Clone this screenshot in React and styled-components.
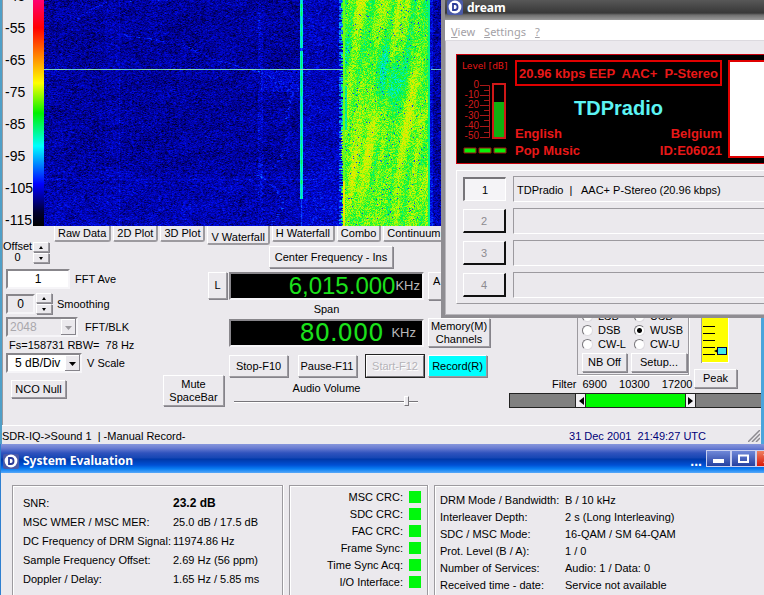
import React, { useEffect, useRef } from "react";
import styled, { createGlobalStyle, css } from "styled-components";

const face = "#ebe9ed";
const light = "#ffffff";
const shade = "#9c9a9f";
const sans = '"Liberation Sans", Arial, sans-serif';

const GlobalStyle = createGlobalStyle`
  *, *::before, *::after { box-sizing: border-box; }
  html, body { margin: 0; height: 100%; }
  body {
    background: ${face};
    color: #000;
    font: 11px/14px ${sans};
    overflow: hidden;
  }
  button, input, select { font: inherit; color: inherit; margin: 0; padding: 0; border-radius: 0; }
  table { border-collapse: collapse; }
  td, th { padding: 0; text-align: left; font-weight: normal; white-space: nowrap; }
`;

const raised = css`
  border: 1px solid;
  border-color: ${light} ${shade} ${shade} ${light};
  box-shadow: 1px 1px 0 #85838a;
`;
const sunken = css`
  border: 2px solid;
  border-color: #88868b #f6f5f8 #f6f5f8 #88868b;
`;

const Desktop = styled.div`
  position: relative;
  display: flex;
  flex-direction: column;
  min-height: 100vh;
  overflow: hidden;
`;

/* ---------- receiver window ---------- */

const Receiver = styled.main`
  display: flex;
  flex-direction: column;
  background: ${face};
  border-left: 2px solid #4f9fc8;
  border-right: 3px solid #4aa5dc;
`;

const Spectrum = styled.section`
  display: flex;
  height: 226px;
  overflow: hidden;
  border-left: 1px solid ${shade};
`;
const Scale = styled.ol`
  list-style: none;
  margin: -20px 0 0;
  padding: 0 0 0 2px;
  width: 30px;
  flex: none;
  font-size: 14px;
  white-space: nowrap;
  li { height: 32px; line-height: 32px; }
`;
const Palette = styled.div`
  width: 11px;
  flex: none;
  background: linear-gradient(#ff0070 0, #ff0000 28px, #ff8000 55px, #ffff00 83px,
    #00f000 113px, #00ffff 146px, #0000ff 184px, #000030 212px, #000 226px);
`;
const Waterfall = styled.canvas`
  display: block;
  flex: none;
`;

const Controls = styled.section`
  display: grid;
  grid-template-columns: 50px 110px 66px 196px 66px minmax(0, 1fr);
  grid-template-rows: 19px 20px 160px;
  border-left: 1px solid ${shade};
`;

const OffsetBlock = styled.div`
  grid-area: 1 / 1 / 3 / 2;
  display: flex;
  align-items: flex-end;
  gap: 1px;
  padding-bottom: 2px;
  line-height: 11px;
  text-align: center;
`;
const Spin = styled.span`
  display: flex;
  flex-direction: column;
  gap: 1px;
  flex: none;
`;
const SpinButton = styled.button`
  ${raised}
  display: grid;
  place-items: center;
  width: 16px;
  height: 10px;
  background: ${face};
  svg { display: block; }
`;

const Tabs = styled.nav`
  grid-area: 1 / 2 / 2 / 7;
  display: flex;
  align-items: flex-start;
  gap: 2px;
  padding-left: 1px;
  overflow: hidden;
`;
const Tab = styled.button`
  border: solid;
  border-width: 0 2px 2px 1px;
  border-color: ${face} ${shade} ${shade} ${light};
  border-radius: 0 0 3px 2px;
  background: ${face};
  height: ${(p) => (p.$active ? 19 : 16)}px;
  line-height: 12px;
  padding: ${(p) => (p.$active ? 4 : 0)}px 3px 0;
  white-space: nowrap;
`;

const Settings = styled.div`
  grid-area: 3 / 1 / 4 / 3;
  padding: 4px 0 0 3px;
  display: flex;
  flex-direction: column;
  align-items: flex-start;
`;
const Field = styled.label`
  display: flex;
  align-items: center;
  gap: ${(p) => p.$gap || 5}px;
  margin-bottom: ${(p) => p.$after || 0}px;
  white-space: nowrap;
`;
const Entry = styled.input`
  ${sunken}
  width: ${(p) => p.$w}px;
  height: 20px;
  text-align: center;
  background: ${(p) => (p.$flat ? face : "#fff")};
  font-size: 12px;
`;
const Pick = styled.span`
  position: relative;
  display: block;
  svg {
    position: absolute;
    right: 2px;
    top: 2px;
    pointer-events: none;
  }
`;
const Select = styled.select`
  ${sunken}
  appearance: none;
  display: block;
  width: ${(p) => p.$w}px;
  height: 20px;
  padding-left: ${(p) => p.$pad}px;
  background: ${(p) => (p.disabled ? face : "#fff")};
  color: ${(p) => (p.disabled ? "#a9a7ac" : "#000")};
  opacity: 1;
  font-size: 12px;
`;
const Note = styled.p`
  margin: 0;
  padding-left: 3px;
  line-height: 16px;
  white-space: pre;
`;

const Button = styled.button`
  ${raised}
  background: ${(p) => p.$bg || face};
  width: ${(p) => (p.$w ? p.$w + "px" : "auto")};
  height: ${(p) => p.$h || 22}px;
  line-height: 13px;
  white-space: pre;
  flex: none;
  &:disabled {
    color: #b5b3b8;
    text-shadow: 1px 1px 0 #fff;
    outline: 1px solid #222;
    box-shadow: none;
    border-right-color: #77757a;
    border-bottom-color: #77757a;
  }
`;
const NullKey = styled(Button)`
  margin-left: 5px;
`;

const SideKeys = styled.div`
  grid-area: 2 / 3 / 4 / 4;
  display: flex;
  flex-direction: column;
  justify-content: space-between;
  padding: 27px 5px 19px 0;
`;
const LeftKey = styled(Button)`
  align-self: flex-end;
  margin-right: -3px;
`;

const Tuning = styled.div`
  grid-area: 2 / 4 / 4 / 5;
  display: flex;
  flex-direction: column;
  padding: 1px 1px 0 0;
`;
const CenterButton = styled(Button)`
  align-self: center;
  margin: 0 0 4px 9px;
`;
const Readout = styled.output`
  ${sunken}
  display: flex;
  align-items: center;
  justify-content: flex-end;
  gap: ${(p) => (p.$wide ? 8 : 0)}px;
  height: 28px;
  padding-right: ${(p) => (p.$wide ? 6 : 2)}px;
  background: #000;
  color: #1be01b;
  font: 24px/24px ${(p) => (p.$wide ? '"DejaVu Sans", sans-serif' : sans)};
  small { font: 13px/24px ${sans}; color: #b9b9b9; }
`;
const Caption = styled.div`
  text-align: center;
  line-height: ${(p) => p.$h}px;
`;
const KeyRow = styled.div`
  display: flex;
  justify-content: space-between;
  padding: 8px 0 3px;
`;
const Volume = styled.input`
  appearance: none;
  display: block;
  width: 184px;
  height: 10px;
  margin: 0 0 0 5px;
  background: linear-gradient(#77757a, #77757a) 0 5px / 100% 1px no-repeat,
    linear-gradient(#fff, #fff) 0 6px / 100% 1px no-repeat;
  &::-webkit-slider-thumb {
    appearance: none;
    width: 5px;
    height: 10px;
    background: ${face};
    border: 1px solid;
    border-color: #fff #77757a #77757a #fff;
  }
`;

const Memory = styled.div`
  grid-area: 2 / 5 / 4 / 6;
  display: flex;
  flex-direction: column;
  align-items: flex-start;
  padding: 27px 0 0 3px;
`;
const ArrowKey = styled(Button)`
  text-align: left;
  padding: 0 0 10px 4px;
  margin-bottom: 18px;
`;
const MemoryKey = styled(Button)`
  margin-bottom: 8px;
`;

const Demod = styled.div`
  grid-area: 2 / 6 / 4 / 7;
  display: flex;
  flex-direction: column;
  justify-content: flex-end;
  padding: 0 0 17px 18px;
`;
const DemodTop = styled.div`
  display: flex;
  align-items: flex-end;
  gap: 5px;
  padding-left: 68px;
`;
const ModeBox = styled.fieldset`
  margin: 0 0 13px;
  width: 112px;
  border: 1px solid ${shade};
  box-shadow: 1px 1px 0 #fff;
  padding: 0 1px 2px 4px;
  flex: none;
`;
const Modes = styled.div`
  display: grid;
  grid-template-columns: 52px 1fr;
  margin-bottom: 2px;
  label { display: flex; align-items: center; gap: 5px; height: 14px; }
`;
const Radio = styled.input`
  appearance: none;
  flex: none;
  width: 11px;
  height: 11px;
  border-radius: 50%;
  border: 1px solid;
  border-color: #77757a #dddbe0 #dddbe0 #77757a;
  background: #fff;
  &:checked { background: radial-gradient(circle, #000 0 2px, #fff 3px); }
`;
const ModeKeys = styled.div`
  display: flex;
  justify-content: space-between;
`;
const PeakColumn = styled.div`
  display: flex;
  flex-direction: column;
  gap: 6px;
`;
const Gain = styled.svg`
  display: block;
  margin-left: 7px;
`;
const FilterRow = styled.div`
  display: flex;
  gap: 6px;
  line-height: 14px;
  margin-top: -11px;
  padding-left: 43px;
  white-space: nowrap;
`;
const FilterValues = styled.div`
  display: flex;
  justify-content: space-between;
  width: 110px;
`;
const FilterBar = styled.div`
  display: grid;
  grid-template-columns: 65px 10px 100px 10px minmax(0, 1fr);
  height: 15px;
  margin-top: 2px;
  background: #808080;
  border: 1px solid #222;
  border-right: 0;
`;
const Grip = styled.button`
  border: 0;
  border-left: 1px solid #222;
  background: #f2f1f4;
  display: grid;
  place-items: center;
`;
const Pass = styled.div`
  background: #00f800;
  border-left: 1px solid #222;
`;
const HighStop = styled.span`
  border-left: 1px solid #222;
`;

const StatusBar = styled.footer`
  display: flex;
  align-items: center;
  justify-content: space-between;
  height: 19px;
  border-top: 1px solid #fff;
  padding-top: 2px;
  white-space: pre;
  time { color: #000078; margin-left: auto; margin-right: 42px; }
  svg { margin-right: 1px; }
`;

/* ---------- dream window ---------- */

const Dream = styled.section`
  position: absolute;
  top: 0;
  left: 441px;
  right: 0;
  height: 318px;
  border: solid #8f8d92;
  border-width: 0 0 3px 4px;
  background: ${face};
  box-shadow: inset 0 -1px 0 #b9b7bc, inset 1px 0 0 #b9b7bc;
  overflow: hidden;
`;
const DreamTitle = styled.header`
  display: flex;
  align-items: flex-start;
  gap: 4px;
  height: 20px;
  padding-left: 2px;
  background: linear-gradient(#585858, #444 8px, #383838 13px, #6e6e6e 15px, #9a9a9a);
  h1 { margin: 0; font: 700 12px/15px "Noto Sans", sans-serif; color: #fff; }
`;
const Menu = styled.nav`
  display: flex;
  gap: 9px;
  height: 21px;
  padding: 3px 6px 0;
  background: #fff;
  border-bottom: 1px solid #dcdadf;
  button {
    border: 0;
    background: none;
    color: #a3a1a6;
    font: 11px/15px "Noto Sans", sans-serif;
  }
`;
const Display = styled.div`
  display: flex;
  align-items: stretch;
  margin: 13px 0 0 11px;
  height: 110px;
  background: #000;
  border: solid #c8000c;
  border-width: 1px 0 1px 1px;
  color: #e81818;
`;
const Meter = styled.div`
  width: 58px;
  flex: none;
  padding: 6px 0 0 5px;
  h2 { margin: 0; font: 9px/11px "DejaVu Sans", sans-serif; white-space: nowrap; }
  svg { display: block; }
`;
const Info = styled.div`
  display: flex;
  flex-direction: column;
  flex: 0 0 207px;
  padding-top: 5px;
  font: 700 13px/17px ${sans};
`;
const Rate = styled.div`
  border: 2px solid #e00000;
  height: 26px;
  line-height: 23px;
  text-align: center;
  white-space: pre;
`;
const Station = styled.h2`
  margin: 8px 0 3px;
  text-align: center;
  font: 700 20px/28px ${sans};
  color: #5cf4f4;
`;
const Pair = styled.div`
  display: flex;
  justify-content: space-between;
`;
const Picture = styled.div`
  flex: 1;
  margin: 5px 0 5px 6px;
  border: solid #e00000;
  border-width: 2px 0 2px 2px;
  background: #fff;
`;
const Services = styled.div`
  display: grid;
  grid-template-columns: 43px minmax(0, 1fr);
  gap: 6px 7px;
  margin: 6px 0 0 11px;
  padding: 5px 0 5px 6px;
  border: solid;
  border-width: 1px 0 1px 1px;
  border-color: #fff ${shade} ${shade} #fff;
`;
const Service = styled.button`
  height: 24px;
  margin: 1px 0 0;
  border: solid;
  border-width: ${(p) => (p.$on ? "2px 1px 1px 2px" : "1px 2px 2px 1px")};
  border-color: ${(p) => (p.$on ? "#77757a #fff #fff #77757a" : "#fff #111 #111 #fff")};
  background: ${(p) => (p.$on ? "#f5f4f7" : face)};
  &:disabled { color: #8d8b90; }
`;
const ServiceText = styled.div`
  height: 26px;
  line-height: 26px;
  padding-left: 3px;
  border: solid;
  border-width: 1px 0 1px 1px;
  border-color: ${shade} #fff #fff ${shade};
  white-space: pre;
`;

/* ---------- evaluation window ---------- */

const Evaluation = styled.section`
  flex: 1;
  display: flex;
  flex-direction: column;
  min-height: 151px;
  border-left: 1px solid #2f7fd0;
  background: ${face};
`;
const EvalTitle = styled.header`
  display: flex;
  align-items: center;
  gap: 4px;
  height: 29px;
  padding: 5px 0 0 2px;
  color: #fff;
  overflow: hidden;
  background: linear-gradient(#8796dc, #6a7dd2 4px, #2f52bd 9px, #1546b4 14px, #0038a8 15px,
    #0050d4 21px, #0a80f4 25px, #58a8f8);
  h1 { margin: 0; font: 700 12px/16px "Noto Sans", sans-serif; flex: 1; white-space: nowrap; }
`;
const Caps = styled.div`
  display: flex;
  flex: none;
  margin: -5px -17px 0 0;
`;
const Cap = styled.button`
  display: grid;
  place-items: center;
  width: 25px;
  height: 17px;
  border: 1px solid #c8cff0;
  background: ${(p) => (p.$close ? "linear-gradient(#f08060, #d81808)" : "linear-gradient(#7088d8, #2440a0)")};
`;
const Dots = styled.span`
  font: 700 14px/14px ${sans};
`;
const Panels = styled.div`
  flex: 1;
  display: grid;
  grid-template-columns: 271px 139px minmax(0, 1fr);
  gap: 6px;
  padding: 12px 0 0 11px;
`;
const Panel = styled.div`
  border: solid ${shade};
  border-width: ${(p) => (p.$open ? "1px 0 0 1px" : "1px 1px 0 1px")};
  box-shadow: inset 1px 1px 0 #fff, 1px 0 0 #fff;
  padding: ${(p) => p.$pad};
`;
const Facts = styled.table`
  th { width: ${(p) => p.$w}px; }
  td, th { height: ${(p) => p.$row}px; }
  strong { font-size: 12px; }
`;
const Checks = styled.ul`
  list-style: none;
  margin: 0;
  padding: 0;
  li {
    display: flex;
    justify-content: flex-end;
    align-items: center;
    gap: 6px;
    height: 17px;
  }
`;
const Lamp = styled.span`
  width: 12px;
  height: 12px;
  background: #00f80c;
`;

/* ---------- drawings ---------- */

const Arrow = ({ dir = "up" }) => {
  const paths = { up: "M0 3L2 0L4 3Z", down: "M0 0L4 0L2 3Z" };
  return (
    <svg width="4" height="3" viewBox="0 0 4 3" aria-hidden="true">
      <path d={paths[dir]} fill="#000" />
    </svg>
  );
};

const DropArrow = ({ muted }) => (
  <svg width="15" height="16" viewBox="0 0 15 16" aria-hidden="true">
    <rect width="15" height="16" fill="#85838a" />
    <rect width="14" height="15" fill="#fff" />
    <rect x="1" y="1" width="13" height="14" fill={face} />
    <path d="M4 7H11L7.5 11Z" fill={muted ? "#9c9a9f" : "#000"} />
  </svg>
);

const Logo = () => (
  <svg width="16" height="15" viewBox="0 0 16 15" aria-hidden="true">
    <rect width="16" height="15" rx="2" fill="#4a5aa8" />
    <circle cx="8" cy="7" r="6.4" fill="#fff" />
    <path d="M6 4H8C11.4 4 11.400 10 8 10H6Z" fill="none" stroke="#2b3c98" strokeWidth="1.8" />
  </svg>
);

const hash = (x, y) => {
  let n = Math.imul(x | 0, 374761393) + Math.imul(y | 0, 668265263);
  n = Math.imul(n ^ (n >>> 13), 1274126177);
  return ((n ^ (n >>> 16)) >>> 0) / 4294967296;
};
const smooth = (x, y) => {
  const i = Math.floor(x);
  const j = Math.floor(y);
  const f = x - i;
  const g = y - j;
  const a = hash(i, j) * (1 - f) + hash(i + 1, j) * f;
  const b = hash(i, j + 1) * (1 - f) + hash(i + 1, j + 1) * f;
  return a * (1 - g) + b * g;
};
const stops = [
  [0, 0, 0, 20],
  [0.1, 0, 0, 125],
  [0.24, 0, 10, 235],
  [0.36, 10, 90, 255],
  [0.5, 0, 235, 235],
  [0.62, 0, 245, 60],
  [0.76, 190, 250, 0],
  [0.87, 250, 225, 0],
  [1, 255, 90, 0],
];
const colour = (t) => {
  const v = Math.min(1, Math.max(0, t));
  let k = 1;
  while (stops[k][0] < v) k += 1;
  const a = stops[k - 1];
  const b = stops[k];
  const f = (v - a[0]) / (b[0] - a[0]);
  return [1, 2, 3].map((c) => a[c] + (b[c] - a[c]) * f);
};

/* faint drifting carriers, as polylines in canvas coordinates */
const traces = [
  [[76, 34], [140, 44], [165, 58], [215, 72]],
  [[30, 20], [46, 10], [60, 2], [110, 0]],
  [[216, 72], [240, 84], [250, 92], [243, 110], [243, 150], [230, 166], [215, 175], [235, 190], [238, 205], [226, 225]],
];
const traceX = (pts, y) => {
  for (let k = 1; k < pts.length; k += 1) {
    const [x0, y0] = pts[k - 1];
    const [x1, y1] = pts[k];
    const lo = Math.min(y0, y1);
    const hi = Math.max(y0, y1);
    if (y >= lo && y < hi) return [x0 + ((x1 - x0) * (y - y0)) / (y1 - y0), Math.abs((x1 - x0) / (y1 - y0))];
  }
  return null;
};

const paint = (canvas) => {
  const g = canvas.getContext("2d");
  const { width, height } = canvas;
  const img = g.createImageData(width, height);
  for (let y = 0; y < height; y += 1) {
    const hits = traces.map((t) => traceX(t, y));
    for (let x = 0; x < width; x += 1) {
      const r = (hash(x, y) + hash(x + 1, y) + hash(x + 977, y * 3)) / 3;
      let t = 0.005 + r * 0.27 + (smooth(x / 14, y / 9) - 0.5) * 0.04;
      if (x > 257 && x < 300) t += 0.035;
      if (x > 60 && x < 76) t += 0.012;
      if (y > 170) t += 0.015 + (y - 170) * 0.0003;
      if (x > 213 && x < 219) t += 0.09 * hash(x, y + 7);
      if (x > 216 && x < 255 && y > 69 && y < 92) t += 0.09 * hash(x + 5, y);
      if (x === 75) t += 0.04;
      hits.forEach((h, k) => {
        const wobble = (hash(k, y >> 1) - 0.5) * 4;
        if (h && Math.abs(x - h[0] - wobble) < 1 + h[1] / 2 && hash(x >> 2, y) > 0.5) t += 0.1;
      });
      if (y === 179) t += 0.04;
      const edge = 298 + Math.round((hash(3, y) - 0.5) * 3);
      if (x >= edge && x < 386) {
        const u = x + y * 0.15;
        const band = smooth(u / 5, y / 80 + 9) * 0.55 + smooth(u / 12, y / 60) * 0.45;
        t = 0.52 + band * 0.33 + (hash(x, y) - 0.5) * 0.17;
        const hole = Math.exp(-(((x - 346) / 12) ** 2) - ((y - 78) / 28) ** 2);
        t -= hole * 0.15;
        if (x < 303 && y > 85 && y < 130) t = 0.5 + r * 0.12;
        if (hash(x * 7, y) > 0.988) t = 0.32;
        if (x === 299 || x === 300) t = y > 180 ? 0.85 : 0.7;
        if (x > 383) t = 0.57;
      } else if (x > 294 && x < edge && hash(1, y) > 0.5) {
        t = 0.25 + r * 0.25;
      } else if (x >= 386 && x < 389) {
        t += 0.08;
      }
      if (x > 255 && x < 259) {
        if (y < 199) t = (x === 257 ? 0.53 : 0.46) + hash(2, y >> 2) * 0.08;
        else if (x === 257) t += 0.12;
        if (y > 47 && y < 51) t -= 0.2;
      }
      const sweep = y === 69 && (x < 298 || x > 386);
      const tone = smooth(x / 9, 3);
      const [R, G, B] = sweep ? [90 + tone * 60, 190 + tone * 40, 215 - tone * 50] : colour(t);
      const o = (y * width + x) * 4;
      img.data[o] = R;
      img.data[o + 1] = G;
      img.data[o + 2] = B;
      img.data[o + 3] = 255;
    }
  }
  g.putImageData(img, 0, 0);
};

const WaterfallPlot = () => {
  const ref = useRef(null);
  useEffect(() => paint(ref.current), []);
  return <Waterfall ref={ref} width={720} height={226} role="img" aria-label="V Waterfall" />;
};

const MeterScale = () => (
  <svg width="46" height="75" viewBox="0 0 46 75" fill="none" aria-label="Level" fontFamily='"Liberation Sans", sans-serif' fontSize="10">
    <path d="M18 13.5H27.5V65.5H18M22 18.5H27M18 23.5H27M22 28.5H27M18 33.5H27M22 38.5H27M18 43.5H27M22 48.5H27M18 54.5H27M22 60.5H27" stroke="#a81818" />
    <g fill="#d01c1c" textAnchor="end">
      <text x="17" y="16">0</text>
      <text x="17" y="26">-10</text>
      <text x="17" y="36">-20</text>
      <text x="17" y="47">-30</text>
      <text x="17" y="57">-40</text>
      <text x="17" y="67">-50</text>
    </g>
    <rect x="31" y="12" width="12" height="54" stroke="#d01818" strokeWidth="2" />
    <rect x="32" y="30" width="10" height="35" fill="#10b010" />
  </svg>
);
const Leds = () => (
  <svg width="46" height="7" viewBox="0 0 46 7" aria-hidden="true">
    <path d="M2 1H14V6H2ZM17 1H29V6H17ZM32 1H44V6H32Z" fill="#08f008" stroke="#a01010" />
  </svg>
);

const tabs = ["Raw Data", "2D Plot", "3D Plot", "V Waterfall", "H Waterfall", "Combo", "Continuum"];
const levels = [-45, -55, -65, -75, -85, -95, -105, -115];
const modes = ["LSB", "USB", "DSB", "WUSB", "CW-L", "CW-U"];
const services = ["TDPradio  |   AAC+ P-Stereo (20.96 kbps)", "", "", ""];
const quality = [
  ["SNR:", <strong key="snr">23.2 dB</strong>],
  ["MSC WMER / MSC MER:", "25.0 dB / 17.5 dB"],
  ["DC Frequency of DRM Signal:", "11974.86 Hz"],
  ["Sample Frequency Offset:", "2.69 Hz (56 ppm)"],
  ["Doppler / Delay:", "1.65 Hz / 5.85 ms"],
];
const checks = ["MSC CRC:", "SDC CRC:", "FAC CRC:", "Frame Sync:", "Time Sync Acq:", "I/O Interface:"];
const channel = [
  ["DRM Mode / Bandwidth:", "B / 10 kHz"],
  ["Interleaver Depth:", "2 s (Long Interleaving)"],
  ["SDC / MSC Mode:", "16-QAM / SM 64-QAM"],
  ["Prot. Level (B / A):", "1 / 0"],
  ["Number of Services:", "Audio: 1 / Data: 0"],
  ["Received time - date:", "Service not available"],
];

const Spinner = ({ name }) => (
  <Spin>
    <SpinButton aria-label={`${name} up`}><Arrow /></SpinButton>
    <SpinButton aria-label={`${name} down`}><Arrow dir="down" /></SpinButton>
  </Spin>
);

const FactTable = ({ rows, w, row }) => (
  <Facts $w={w} $row={row}>
    <tbody>
      {rows.map(([k, v]) => (
        <tr key={k}><th scope="row">{k}</th><td>{v}</td></tr>
      ))}
    </tbody>
  </Facts>
);

export default function App() {
  return (
    <>
      <GlobalStyle />
      <Desktop>
        <Receiver>
          <Spectrum>
            <Scale>{levels.map((l) => <li key={l}>{l}</li>)}</Scale>
            <Palette />
            <WaterfallPlot />
          </Spectrum>
          <Controls>
            <OffsetBlock>
              <span>Offset<br />0</span>
              <Spinner name="Offset" />
            </OffsetBlock>
            <Tabs>
              {tabs.map((t) => <Tab key={t} $active={t === "V Waterfall"}>{t}</Tab>)}
            </Tabs>
            <Settings>
              <Field $after={4}><Entry $w={64} defaultValue="1" />FFT Ave</Field>
              <Field as="div" $after={3}>
                <Field as="div" $gap={1}>
                  <Entry id="smoothing" $w={29} $flat defaultValue="0" />
                  <Spinner name="Smoothing" />
                </Field>
                <label htmlFor="smoothing">Smoothing</label>
              </Field>
              <Field $gap={7}>
                <Pick>
                  <Select $w={72} $pad={2} disabled defaultValue="2048"><option>2048</option></Select>
                  <DropArrow muted />
                </Pick>
                FFT/BLK
              </Field>
              <Note>{"Fs=158731 RBW=  78 Hz"}</Note>
              <Field $after={7}>
                <Pick>
                  <Select $w={76} $pad={7} defaultValue="5 dB/Div"><option>5 dB/Div</option></Select>
                  <DropArrow />
                </Pick>
                V Scale
              </Field>
              <NullKey $w={55} $h={18}>NCO Null</NullKey>
            </Settings>
            <SideKeys>
              <LeftKey $w={19} $h={27}>L</LeftKey>
              <Button $h={31}>{"Mute\nSpaceBar"}</Button>
            </SideKeys>
            <Tuning>
              <CenterButton $w={124}>Center Frequency - Ins</CenterButton>
              <Readout>6,015.000<small>KHz</small></Readout>
              <Caption $h={19}>Span</Caption>
              <Readout $wide>80.000<small>KHz</small></Readout>
              <KeyRow>
                <Button $w={59}>Stop-F10</Button>
                <Button $w={59}>Pause-F11</Button>
                <Button $w={58} disabled>Start-F12</Button>
              </KeyRow>
              <Caption as="label" htmlFor="volume" $h={16}>Audio Volume</Caption>
              <Volume id="volume" type="range" min="0" max="100" defaultValue="95" />
            </Tuning>
            <Memory>
              <ArrowKey $w={60} $h={28}>A</ArrowKey>
              <MemoryKey $w={62} $h={29}>{"Memory(M)\nChannels"}</MemoryKey>
              <Button $w={59} $bg="#00ffff">Record(R)</Button>
            </Memory>
            <Demod>
              <DemodTop>
                <ModeBox>
                  <Modes>
                    {modes.map((m) => (
                      <label key={m}><Radio type="radio" name="mode" defaultChecked={m === "WUSB"} />{m}</label>
                    ))}
                  </Modes>
                  <ModeKeys>
                    <Button $w={45} $h={19}>NB Off</Button>
                    <Button $w={56} $h={19}>Setup...</Button>
                  </ModeKeys>
                </ModeBox>
                <PeakColumn>
                  <Gain width="28" height="52" viewBox="0 0 28 52" role="img" aria-label="Gain">
                    <rect width="28" height="52" fill="#fff" />
                    <path d="M0 52V0H1V52Z" fill="#9c9a9f" />
                    <rect x="1" width="26" height="51" fill="#ffff00" />
                    <path d="M2 15.500H14M2 22.500H14M2 29.500H14M2 36.500H14M2 43.500H14" stroke="#000" />
                    <path d="M13 40L17 38V42Z" />
                    <rect x="16.500" y="36.500" width="9" height="7" fill="#40e8e8" stroke="#004" />
                  </Gain>
                  <Button $w={43} $h={19}>Peak</Button>
                </PeakColumn>
              </DemodTop>
              <FilterRow>
                <span>Filter</span>
                <FilterValues>
                  <span>6900</span><span>10300</span><span>17200</span>
                </FilterValues>
              </FilterRow>
              <FilterBar>
                <span />
                <Grip aria-label="Filter low">
                  <svg width="6" height="8" viewBox="0 0 6 8"><path d="M6 0V8L1 4Z" /></svg>
                </Grip>
                <Pass />
                <Grip aria-label="Filter high">
                  <svg width="6" height="8" viewBox="0 0 6 8"><path d="M0 0V8L5 4Z" /></svg>
                </Grip>
                <HighStop />
              </FilterBar>
            </Demod>
          </Controls>
          <StatusBar>
            <span>{"SDR-IQ->Sound 1  | -Manual Record-"}</span>
            <time>{"31 Dec 2001  21:49:27 UTC"}</time>
            <svg width="12" height="12" viewBox="0 0 12 12" aria-hidden="true">
              <path d="M0 12L12 0M4 12L12 4M8 12L12 8" stroke="#8d8b90" strokeWidth="1.5" />
            </svg>
          </StatusBar>
        </Receiver>

        <Evaluation>
          <EvalTitle>
            <Logo />
            <h1>System Evaluation</h1>
            <Dots>...</Dots>
            <Caps>
              <Cap aria-label="Minimize"><svg width="11" height="9"><path d="M0 5H11V9H0Z" fill="#fff" /></svg></Cap>
              <Cap aria-label="Maximize"><svg width="11" height="9"><path d="M1 1.500H10V8H1Z" fill="none" stroke="#fff" strokeWidth="2" /></svg></Cap>
              <Cap aria-label="Close" $close><svg width="11" height="9"><path d="M1 0L10 9M10 0L1 9" stroke="#fff" strokeWidth="2" /></svg></Cap>
            </Caps>
          </EvalTitle>
          <Panels>
            <Panel $pad="7px 0 0 10px"><FactTable rows={quality} w={150} row={19} /></Panel>
            <Panel $pad="2px 6px 0 0">
              <Checks>{checks.map((c) => <li key={c}>{c}<Lamp /></li>)}</Checks>
            </Panel>
            <Panel $open $pad="5px 0 0 5px"><FactTable rows={channel} w={125} row={17} /></Panel>
          </Panels>
        </Evaluation>

        <Dream>
          <DreamTitle><Logo /><h1>dream</h1></DreamTitle>
          <Menu>
            <button><u>V</u>iew</button>
            <button><u>S</u>ettings</button>
            <button><u>?</u></button>
          </Menu>
          <Display>
            <Meter>
              <h2>Level [dB]</h2>
              <MeterScale />
              <Leds />
            </Meter>
            <Info>
              <Rate>{"20.96 kbps EEP  AAC+  P-Stereo"}</Rate>
              <Station>TDPradio</Station>
              <Pair><span>English</span><span>Belgium</span></Pair>
              <Pair><span>Pop Music</span><span>ID:E06021</span></Pair>
            </Info>
            <Picture />
          </Display>
          <Services>
            {services.map((s, i) => (
              <React.Fragment key={i}>
                <Service $on={i === 0} disabled={i > 0}>{i + 1}</Service>
                <ServiceText>{s}</ServiceText>
              </React.Fragment>
            ))}
          </Services>
        </Dream>
      </Desktop>
    </>
  );
}
